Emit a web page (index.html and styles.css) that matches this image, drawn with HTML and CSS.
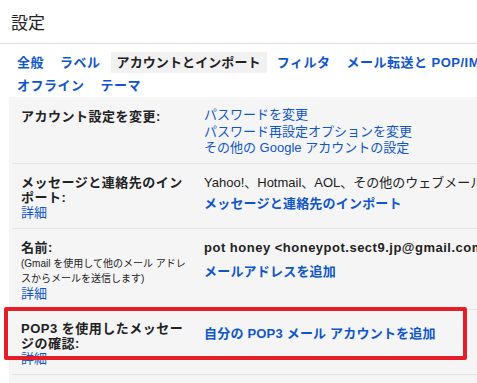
FILE: index.html
```html
<!DOCTYPE html>
<html lang="ja">
<head>
<meta charset="utf-8">
<title>設定</title>
<link rel="stylesheet" href="styles.css">
</head>
<body>
<div class="page">
  <header class="header">
    <h1 class="title">設定</h1>
  </header>
  <nav class="tabs">
    <div class="tab-row">
      <a class="tab">全般</a>
      <a class="tab">ラベル</a>
      <span class="tab tab-active">アカウントとインポート</span>
      <a class="tab">フィルタ</a>
      <a class="tab">メール転送と POP/IMAP</a>
      <a class="tab">チャット</a>
    </div>
    <div class="tab-row">
      <a class="tab">オフライン</a>
      <a class="tab">テーマ</a>
    </div>
  </nav>
  <main class="content">
    <section class="row row-first">
      <div class="label"><span class="label-title">アカウント設定を変更:</span></div>
      <div class="value">
        <ul class="links">
          <li><a class="link">パスワードを変更</a></li>
          <li><a class="link">パスワード再設定オプションを変更</a></li>
          <li><a class="link">その他の Google アカウントの設定</a></li>
        </ul>
      </div>
    </section>
    <section class="row">
      <div class="label">
        <div class="label-title">メッセージと連絡先のイン<br>ポート:</div>
        <a class="link">詳細</a>
      </div>
      <div class="value">
        <div class="text">Yahoo!、Hotmail、AOL、その他のウェブメールまたは POP3 アカウントからインポートします。</div>
        <a class="link link-bold block gap-6">メッセージと連絡先のインポート</a>
      </div>
    </section>
    <section class="row">
      <div class="label">
        <div class="label-title">名前:</div>
        <div class="note">(Gmail を使用して他のメール アドレ<br>スからメールを送信します)</div>
        <a class="link">詳細</a>
      </div>
      <div class="value">
        <div class="text text-bold">pot honey &lt;honeypot.sect9.jp@gmail.com&gt;</div>
        <a class="link link-bold block gap-9">メールアドレスを追加</a>
      </div>
    </section>
    <section class="row row-marked">
      <div class="label">
        <div class="label-title">POP3 を使用したメッセー<br>ジの確認:</div>
        <a class="link">詳細</a>
      </div>
      <div class="value value-low">
        <a class="link link-bold">自分の POP3 メール アカウントを追加</a>
      </div>
      <div class="highlight"></div>
    </section>
    <section class="row row-empty"></section>
  </main>
</div>
</body>
</html>
```

FILE: styles.css
```css
html, body {
  margin: 0;
  padding: 0;
  overflow: hidden;
  background: #ffffff;
}

body {
  font-family: "Liberation Sans", "Noto Sans CJK JP", sans-serif;
  font-size: 13px;
  color: #222222;
}

.page {
  width: 900px;
}

.header {
  height: 29px;
  padding: 14px 0 0 11px;
  border-bottom: 1px solid #e1e1e1;
}

.title {
  margin: 0;
  font-size: 17px;
  font-weight: normal;
  line-height: 20px;
  color: #222222;
}

.tabs {
  padding: 8px 0 0 11px;
}

.tab-row {
  display: flex;
  gap: 4px;
  white-space: nowrap;
}

.tab-row + .tab-row {
  margin-top: 2px;
}

.tab {
  padding: 0 6px;
  line-height: 21px;
  font-weight: bold;
  letter-spacing: 0.5px;
  color: #1155cc;
}

.tab-active {
  color: #222222;
  background: #f1f1f1;
  letter-spacing: 0.1px;
}

.content {
  margin: 1px 0 0 9px;
  padding-left: 3px;
  background: #f5f5f5;
}

.row {
  position: relative;
  display: grid;
  grid-template-columns: 183px 1fr;
  padding: 11px 0 8px 9px;
  border-top: 1px solid #e3e3e3;
  line-height: 15px;
}

.row-first {
  border-top-color: transparent;
}

.row-empty {
  height: 20px;
  padding: 0;
}

.label-title {
  font-weight: bold;
  letter-spacing: 0.5px;
  color: #222222;
}

.note {
  margin-top: 1px;
  font-size: 10px;
  color: #222222;
}

.value {
  white-space: nowrap;
}

.value-low {
  padding-top: 5px;
}

.links {
  list-style: none;
  margin: -2px 0 -1.5px;
  padding: 0;
  line-height: 16.5px;
}

.link {
  color: #1155cc;
  text-decoration: none;
}

.link-bold {
  font-weight: bold;
  letter-spacing: 0.2px;
}

.block {
  display: block;
}

.gap-6 {
  margin-top: 6px;
}

.gap-9 {
  margin-top: 9px;
}

.text-bold {
  font-weight: bold;
  letter-spacing: 0.5px;
}

.highlight {
  position: absolute;
  top: -3px;
  left: -8px;
  width: 463px;
  height: 53px;
  box-sizing: border-box;
  border: 4px solid #e41e26;
  border-radius: 2px;
  pointer-events: none;
}
```
